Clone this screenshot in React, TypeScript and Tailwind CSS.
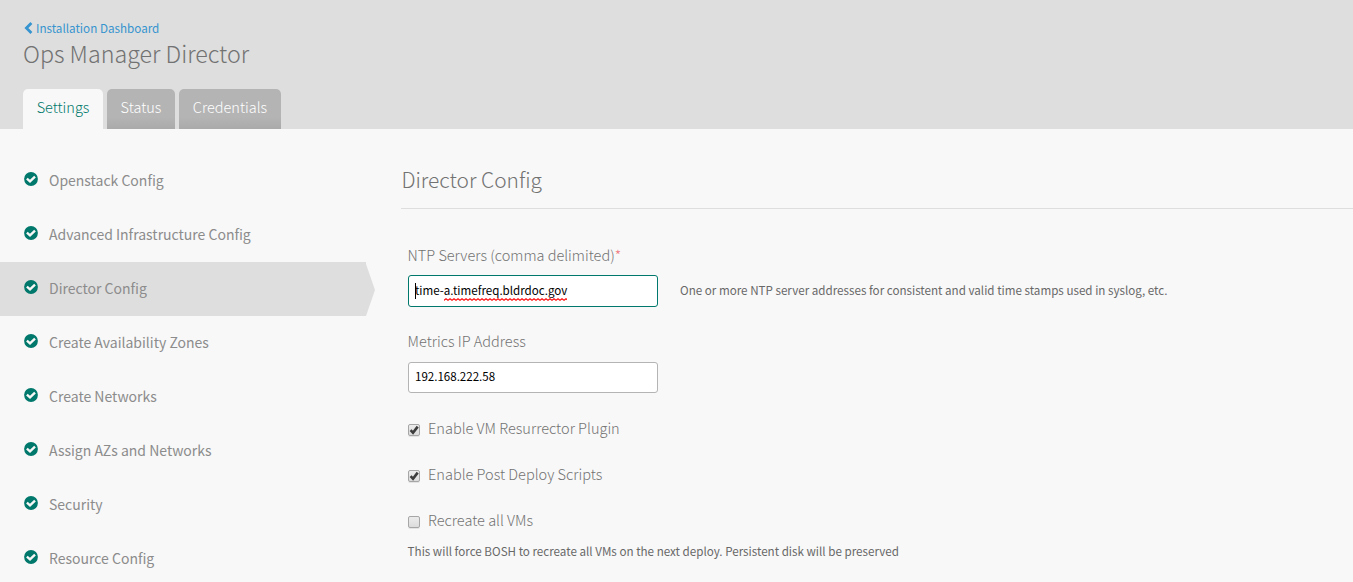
import type { ReactNode } from "react";

const steps = [
  "Openstack Config",
  "Advanced Infrastructure Config",
  "Director Config",
  "Create Availability Zones",
  "Create Networks",
  "Assign AZs and Networks",
  "Security",
  "Resource Config",
];

function CheckCircle() {
  return (
    <svg viewBox="0 0 14 14" className="h-[14px] w-[14px] shrink-0">
      <circle cx="7" cy="7" r="6.9" fill="#00786b" />
      <path d="M2.9 6.7 L6 9.4 L11 4.7" fill="none" stroke="#f8f8f8" strokeWidth="2.4" />
    </svg>
  );
}

function Step({ label, active }: { label: string; active: boolean }) {
  return (
    <li className="flex h-[54px]">
      <a className={`flex w-[366px] items-center pl-6 ${active ? "bg-[#dedede]" : ""}`}>
        <span className="-mt-1 flex">
          <CheckCircle />
        </span>
        <span className="mb-0.5 ml-[11px] text-[14px] leading-5 text-[#8c8c8c]">{label}</span>
      </a>
      {active && (
        <svg viewBox="0 0 9 54" className="h-[54px] w-[9px]">
          <path d="M0 2 L9 28 L0 54 Z" fill="#dedede" />
        </svg>
      )}
    </li>
  );
}

function CheckRow({ label, checked }: { label: string; checked: boolean }) {
  return (
    <label className="flex h-[46px] items-start font-light">
      <span className="mt-[5px] flex h-3 w-3 rounded-[2px] border border-[#a6a6a6] bg-linear-to-b from-[#ececec] to-[#dcdcdc] shadow-[0_1px_0_#e4e4e4]">
        {checked && (
          <svg viewBox="0 0 10 10" className="h-[10px] w-[10px]">
            <path d="M1.6 5.2 L4 7.8 L8.7 1.6" fill="none" stroke="#3c3c3c" strokeWidth="2.6" />
          </svg>
        )}
      </span>
      <span className="ml-2 text-[14.55px] leading-[18px] text-[#727272]">{label}</span>
    </label>
  );
}

function FieldLabel({ children }: { children: ReactNode }) {
  return <div className="-ml-[0.4px] h-5 text-[14.5px] leading-[18px] font-light text-[#727272]">{children}</div>;
}

function Misspelled({ children }: { children: ReactNode }) {
  return (
    <span className="relative">
      {children}
      <svg className="absolute -bottom-[3px] left-0 h-[3px] w-full">
        <defs>
          <pattern id="squiggle" width="4" height="3" patternUnits="userSpaceOnUse">
            <path d="M-1 1.5 L0 2.3 L2 0.7 L4 2.3 L5 1.5" fill="none" stroke="#ff1010" strokeWidth="1.1" />
          </pattern>
        </defs>
        <rect width="100%" height="3" fill="url(#squiggle)" />
      </svg>
    </span>
  );
}

export default function App() {
  return (
    <div className="flex h-[582px] w-full flex-col overflow-hidden bg-[#f8f8f8] font-['Noto_Sans_CJK_SC','Noto_Sans',sans-serif] whitespace-nowrap">
      <header className="flex h-[129px] shrink-0 flex-col bg-[#dedede] pl-[23px]">
        <a className="mt-[18px] flex h-5 items-center text-[11.68px] leading-5 text-[#3694cf]">
          <svg viewBox="0 0 9 12" className="ml-px h-3 w-[9px]">
            <path d="M7.4 1 L2.4 6 L7.4 11" fill="none" stroke="#3694cf" strokeWidth="2.8" />
          </svg>
          <span className="ml-[3px]">Installation Dashboard</span>
        </a>
        <h1 className="h-8 text-[23.28px] leading-[30px] font-light text-[#727272]">Ops Manager Director</h1>
        <nav className="mt-auto flex h-10 gap-1 text-center text-[14.5px] leading-9 font-light text-white">
          <a className="w-20 rounded-t-[5px] bg-[#f8f8f8] text-[#00786b]">Settings</a>
          <a className="w-[68px] rounded-t-[5px] bg-linear-to-b from-[#b4b4b4] from-70% to-[#aaaaaa]">Status</a>
          <a className="w-[102px] rounded-t-[5px] bg-linear-to-b from-[#b4b4b4] from-70% to-[#aaaaaa]">Credentials</a>
        </nav>
      </header>
      <div className="flex">
        <ul className="w-[401px] shrink-0 pt-[25px]">
          {steps.map((label) => (
            <Step key={label} label={label} active={label === "Director Config"} />
          ))}
        </ul>
        <main className="flex flex-1 flex-col">
          <h2 className="h-20 border-b border-[#dedede] pt-[34px] pl-[0.4px] text-[20.9px] leading-8 font-light text-[#727272]">
            Director Config
          </h2>
          <div className="flex flex-col pt-[37px] pl-[7px]">
            <FieldLabel>
              NTP Servers (comma delimited)<span className="text-[#f0757c]">*</span>
            </FieldLabel>
            <div className="mt-[9px] flex items-center">
              <div className="flex h-8 w-[250px] items-center rounded-[3px] border border-[#00786b] bg-white pl-1.5 text-[11.58px] leading-5 text-black">
                <span className="-mr-px h-4 w-px bg-black" />
                <span className="mb-0.5">
                  time-<Misspelled>a.timefreq.bldrdoc.gov</Misspelled>
                </span>
              </div>
              <span className="mb-0.5 ml-[22px] text-[11.63px] leading-5 text-[#686868]">
                One or more NTP server addresses for consistent and valid time stamps used in syslog, etc.
              </span>
            </div>
            <div className="mt-[25px]">
              <FieldLabel>Metrics IP Address</FieldLabel>
            </div>
            <div className="mt-[10px] flex h-[31px] w-[250px] items-center rounded-[3px] border border-[#b4b4b4] bg-white pb-[3px] pl-1.5 text-[11.55px] leading-5 text-black">
              192.168.222.58
            </div>
            <div className="mt-[26px]">
              <CheckRow label="Enable VM Resurrector Plugin" checked />
              <CheckRow label="Enable Post Deploy Scripts" checked />
              <CheckRow label="Recreate all VMs" checked={false} />
            </div>
            <p className="-mt-4 -ml-[0.4px] text-[11.63px] leading-5 text-[#686868]">
              This will force BOSH to recreate all VMs on the next deploy. Persistent disk will be preserved
            </p>
          </div>
        </main>
      </div>
    </div>
  );
}
